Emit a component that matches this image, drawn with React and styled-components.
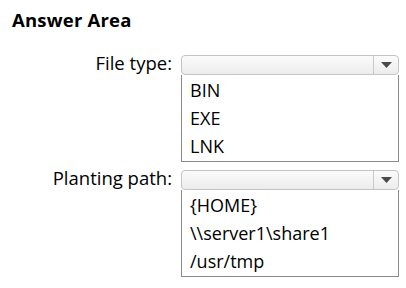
import React from 'react';
import styled, { createGlobalStyle } from 'styled-components';

const GlobalStyle = createGlobalStyle`
  html, body {
    margin: 0;
    padding: 0;
    background: #fff;
  }
  body {
    font-family: "Open Sans", "Noto Sans", sans-serif;
    color: #000;
  }
`;

const Page = styled.div`
  width: 406px;
  height: 288px;
  box-sizing: border-box;
  padding: 8px 7px 0 12px;
`;

const Title = styled.h1`
  margin: 0 0 23px;
  font-size: 18.5px;
  font-weight: 700;
  line-height: 24px;
  letter-spacing: 0.2px;
`;

const Form = styled.div`
  display: grid;
  grid-template-columns: 160px 218px;
  column-gap: 9px;
  row-gap: 8px;
`;

const Label = styled.div`
  text-align: right;
  font-size: 18.5px;
  line-height: 20px;
  height: 20px;
  margin-top: -2px;
  white-space: nowrap;
`;

const Field = styled.div`
  display: flex;
  flex-direction: column;
`;

const Select = styled.div`
  display: flex;
  height: 20px;
  box-sizing: border-box;
  border: 1px solid #c4c4c4;
  border-radius: 4px;
  background: linear-gradient(#fbfbfb, #ececec);
`;

const SelectValue = styled.div`
  flex: 1;
  border-right: 1px solid #c8c8c8;
`;

const Arrow = styled.div`
  width: 24px;
  display: flex;
  align-items: center;
  justify-content: center;
`;

const List = styled.div`
  border: 1px solid #8a8a8a;
  border-top: none;
  box-sizing: border-box;
  height: 87px;
  padding: 1px 0 0 8px;
`;

const Option = styled.div`
  font-size: 18px;
  line-height: 28px;
  height: 28px;
  white-space: nowrap;
`;

const Dropdown = ({ options }) => (
  <Field>
    <Select>
      <SelectValue />
      <Arrow>
        <svg width="11" height="6" viewBox="0 0 11 6">
          <path d="M0 0 H11 L5.5 6 Z" fill="#4a4a4a" />
        </svg>
      </Arrow>
    </Select>
    <List>
      {options.map((o) => (
        <Option key={o}>{o}</Option>
      ))}
    </List>
  </Field>
);

export default function App() {
  return (
    <Page>
      <GlobalStyle />
      <Title>Answer Area</Title>
      <Form>
        <Label>File type:</Label>
        <Dropdown options={['BIN', 'EXE', 'LNK']} />
        <Label>Planting path:</Label>
        <Dropdown options={['{HOME}', '\\\\server1\\share1', '/usr/tmp']} />
      </Form>
    </Page>
  );
}
